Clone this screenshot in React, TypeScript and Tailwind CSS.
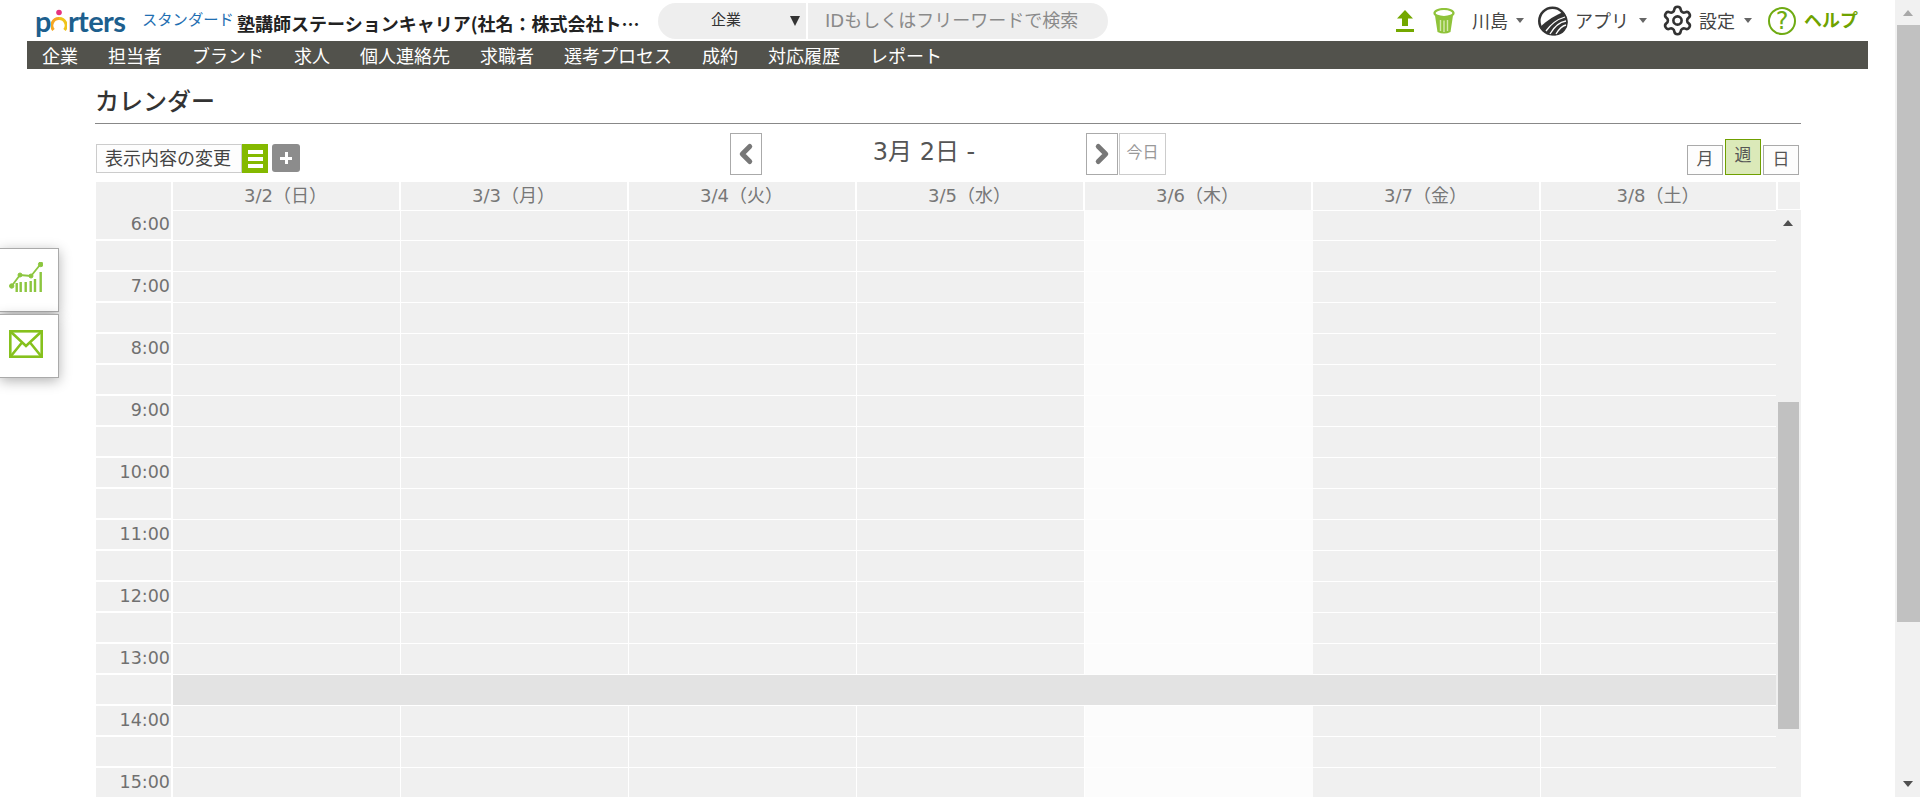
import { ChevronLeft, ChevronRight, Settings } from 'lucide-react'

const navItems = ['企業', '担当者', 'ブランド', '求人', '個人連絡先', '求職者', '選考プロセス', '成約', '対応履歴', 'レポート']
const days = ['3/2（日）', '3/3（月）', '3/4（火）', '3/5（水）', '3/6（木）', '3/7（金）', '3/8（土）']
const rows = Array.from({ length: 19 }, (_, i) => ({
  label: i % 2 === 0 ? `${6 + i / 2}:00` : '',
  lunch: i === 15,
}))

function Caret() {
  return <span className="inline-block border-x-[4px] border-t-[5px] border-x-transparent border-t-[#666]" />
}

function UploadIcon() {
  return (
    <svg width="18" height="22" viewBox="0 0 18 22" className="text-[#74a800]">
      <path d="M9 0 L17 8.5 H12 V16 H6 V8.5 H1 Z" fill="currentColor" />
      <rect x="0" y="19" width="18" height="3" fill="currentColor" />
    </svg>
  )
}

function TrashIcon() {
  return (
    <svg width="22" height="26" viewBox="0 0 22 26">
      <ellipse cx="11" cy="5" rx="9.5" ry="4" fill="none" stroke="#8fc33a" strokeWidth="2.2" />
      <path d="M2 7.5 L4.5 24 Q11 27 17.5 24 L20 7.5 Q11 11 2 7.5 Z" fill="#8fc33a" />
      <path d="M7.5 12 V23 M11 12.5 V24 M14.5 12 V23" stroke="#d5e9ae" strokeWidth="1.4" />
    </svg>
  )
}

function AppIcon() {
  return (
    <svg width="31" height="30" viewBox="0 0 31 30" fill="none">
      <circle cx="15.5" cy="15" r="13.2" stroke="#333" strokeWidth="2.6" />
      <path d="M3 21 C10 14 19 9 26 6 A13 13 0 0 1 9 26.5 Z" fill="#333" />
      <path d="M9 25 C14 18 21 13 28 11 M13 28 C17 21 23 16 29 15 M19 28 C22 23 25 20 29 19" stroke="#fff" strokeWidth="1.3" />
    </svg>
  )
}

function ChartIcon() {
  return (
    <svg width="34" height="31" viewBox="0 0 34 31" fill="none" stroke="#8cc63f">
      <path d="M2.7 24 L11 13 L22 14 L31.7 2" strokeWidth="1.8" />
      <circle cx="2.7" cy="24" r="2.2" fill="#8cc63f" />
      <circle cx="11" cy="13" r="2" fill="#8cc63f" />
      <circle cx="22" cy="14" r="2" fill="#8cc63f" />
      <circle cx="31.7" cy="2.4" r="2.3" fill="#8cc63f" />
      <path d="M7.7 21 V30 M11.7 20 V30 M16.7 20 V30 M21.7 19 V30 M26 17 V30 M31.7 10 V30" strokeWidth="2.4" />
    </svg>
  )
}

function MailIcon() {
  return (
    <svg width="34" height="28" viewBox="0 0 34 28" fill="none" stroke="#86c11d" strokeWidth="2.6">
      <rect x="1.3" y="1.3" width="31.4" height="25.4" />
      <path d="M2 2 L17 16 L32 2 M2 26 L13 12.5 M32 26 L21 12.5" />
    </svg>
  )
}

function Logo() {
  return (
    <div className="flex h-[41px] w-[107px] items-start pt-[2px] font-['Lato',sans-serif] text-[29px] font-bold leading-[37px] tracking-[-0.6px] text-[#1d5f8e]">
      <span>p</span>
      <svg width="16" height="26" viewBox="0 0 16 26" fill="none" className="mx-[0.5px] mt-[7px] shrink-0">
        <circle cx="8" cy="3.5" r="2.8" fill="#e6337f" />
        <path d="M2.5 21 A7 7 0 0 1 8 9.5" stroke="#f5a623" strokeWidth="3" />
        <path d="M13.5 21 A7 7 0 0 0 8 9.5" stroke="#f0c419" strokeWidth="3" />
      </svg>
      <span>rters</span>
    </div>
  )
}

function Header() {
  return (
    <header className="flex h-[41px] items-center pl-[35px]">
      <Logo />
      <span className="w-[95px] whitespace-nowrap text-[15.3px] text-[#1f6fb2]">スタンダード</span>
      <span className="mt-[5px] w-[403px] truncate font-['Noto_Sans_CJK_JP',sans-serif] text-[18px] font-bold text-[#222]">
        塾講師ステーションキャリア(社名：株式会社トップ
      </span>
      <div className="ml-[18px] flex h-[36px] w-[148px] items-center rounded-l-[18px] bg-[#eeeeee]">
        <span className="ml-[53px] text-[15px] text-[#333]">企業</span>
        <span className="ml-[49px] border-x-[5.5px] border-t-[10px] border-x-transparent border-t-[#333]" />
      </div>
      <div className="ml-[2px] flex h-[36px] w-[300px] items-center rounded-r-[18px] bg-[#eeeeee] pl-[17px] text-[18px] text-[#8a8a8a]">
        IDもしくはフリーワードで検索
      </div>
      <div className="ml-[288px]">
        <UploadIcon />
      </div>
      <div className="ml-[19px]">
        <TrashIcon />
      </div>
      <span className="ml-[17px] mt-[2px] text-[18px] text-[#444]">川島</span>
      <span className="ml-[8px] flex"><Caret /></span>
      <div className="ml-[13px] flex">
        <AppIcon />
      </div>
      <span className="ml-[7px] mt-[2px] text-[18px] text-[#444]">アプリ</span>
      <span className="ml-[10px] flex"><Caret /></span>
      <Settings size={33} strokeWidth={1.9} className="ml-[14px] text-[#333]" />
      <span className="ml-[5px] mt-[2px] text-[18px] text-[#444]">設定</span>
      <span className="ml-[9px] flex"><Caret /></span>
      <div className="ml-[16px] flex h-[28px] w-[28px] items-center justify-center rounded-full border-[2.5px] border-[#6fab13] text-[24px] leading-none text-[#6fab13]">
        ?
      </div>
      <span className="ml-[8px] whitespace-nowrap text-[18px] font-bold text-[#6fa300]">ヘルプ</span>
    </header>
  )
}

function Toolbar() {
  return (
    <div className="ml-[96px] flex h-[58px] w-[1704px] items-start">
      <div className="mt-[20px] flex w-[634px] items-start">
        <div className="flex h-[29px] w-[146px] items-center border border-[#cccccc] bg-[#fdfdfd] pl-[8px] text-[18px] whitespace-nowrap text-[#444]">
          表示内容の変更
        </div>
        <div className="flex h-[29px] w-[26px] flex-col items-center justify-center gap-[3px] bg-[#84b900]">
          <span className="h-[4px] w-[15px] bg-white" />
          <span className="h-[4px] w-[15px] bg-white" />
          <span className="h-[4px] w-[15px] bg-white" />
        </div>
        <div className="ml-[4px] flex h-[28px] w-[28px] items-center justify-center rounded-[3px] bg-[#8c8c8c] text-white">
          <span className="relative h-[12px] w-[12px]">
            <span className="absolute left-0 top-[4.5px] h-[3px] w-[12px] bg-white" />
            <span className="absolute left-[4.5px] top-0 h-[12px] w-[3px] bg-white" />
          </span>
        </div>
      </div>
      <div className="mt-[9px] flex h-[42px] w-[32px] items-center justify-center border border-[#aaaaaa] text-[#777]">
        <ChevronLeft size={32} strokeWidth={4} />
      </div>
      <div className="mt-[9px] flex h-[38px] w-[324px] items-center justify-center text-[24px] text-[#555]">3月 2日 -</div>
      <div className="mt-[9px] flex h-[42px] w-[32px] items-center justify-center border border-[#aaaaaa] text-[#777]">
        <ChevronRight size={32} strokeWidth={4} />
      </div>
      <div className="ml-[1px] mt-[9px] flex h-[42px] w-[47px] items-start justify-center border border-[#cccccc] pt-[7px] text-[16px] text-[#999]">
        今日
      </div>
      <div className="ml-auto mr-[1px] mt-[15px] flex items-end gap-[2px]">
        <div className="flex h-[30px] w-[36px] items-center justify-center border border-[#aaaaaa] bg-[#fdfdfd] text-[17px] text-[#555]">月</div>
        <div className="flex h-[36px] w-[36px] items-center justify-center border border-[#6f9f00] bg-[#dbe9b9] pb-[3px] text-[17px] text-[#555]">週</div>
        <div className="flex h-[30px] w-[36px] items-center justify-center border border-[#aaaaaa] bg-[#fdfdfd] text-[17px] text-[#555]">日</div>
      </div>
    </div>
  )
}

function Calendar() {
  return (
    <div className="ml-[96px] flex h-[615px] w-[1705px] overflow-hidden">
      <div className="w-[1680px] shrink-0">
        <div className="grid h-[28px] grid-cols-[77px_repeat(6,228px)_235px]">
          <div className="border-b border-r-2 border-white bg-[#f0f0f0]" />
          {days.map((d) => (
            <div
              key={d}
              className="flex items-center justify-center border-b border-r-2 border-white bg-[#f0f0f0] pb-[1px] pr-[1px] text-[18px] text-[#777] last:border-r-0"
            >
              {d}
            </div>
          ))}
        </div>
        <div className="grid grid-cols-[77px_repeat(6,228px)_235px]">
          {rows.map((row, i) => (
            <div key={i} className="contents">
              <div className="flex h-[31px] items-center justify-end border-b-2 border-r-2 border-white bg-[#f0f0f0] pb-[1px] pr-[1px] text-[17.5px] text-[#707070]">
                {row.label}
              </div>
              {row.lunch ? (
                <div className="col-span-7 h-[31px] border-b border-white bg-[#e3e3e3]" />
              ) : (
                days.map((d, j) => (
                  <div
                    key={d}
                    className={
                      j === 4
                        ? 'h-[31px] border-b border-[#fefefe] bg-[#fcfcfc]'
                        : i === 0
                          ? 'h-[31px] border-y border-r border-white bg-[#f0f0f0] last:border-r-0'
                          : 'h-[31px] border-b border-r border-white bg-[#f0f0f0] last:border-r-0'
                    }
                  />
                ))
              )}
            </div>
          ))}
        </div>
      </div>
      <div className="w-[25px]">
        <div className="ml-[2px] h-[27px] w-[22px] bg-[#f0f0f0]" />
        <div className="h-[1px]" />
        <div className="flex h-[587px] flex-col bg-[#f0f0f0] pt-[10px]">
          <span className="ml-[7px] h-0 w-0 border-x-[5.5px] border-b-[6px] border-x-transparent border-b-[#505050]" />
          <div className="ml-[2px] mt-[176px] h-[327px] w-[21px] bg-[#c1c1c1]" />
        </div>
      </div>
    </div>
  )
}

function PageScrollbar() {
  return (
    <div className="flex h-[797px] w-[25px] shrink-0 flex-col bg-[#f1f1f1]">
      <div className="flex h-[25px] items-center justify-center">
        <span className="h-0 w-0 border-x-[5.5px] border-b-[6px] border-x-transparent border-b-[#a8a8a8]" />
      </div>
      <div className="ml-[2px] h-[597px] w-[23px] bg-[#c1c1c1]" />
      <div className="flex flex-1 items-end justify-center pb-[10px]">
        <span className="h-0 w-0 border-x-[5.5px] border-t-[6px] border-x-transparent border-t-[#505050]" />
      </div>
    </div>
  )
}

export default function App() {
  return (
    <div className="relative flex h-[800px] w-full overflow-hidden bg-white font-['DejaVu_Sans','Noto_Sans_CJK_JP',sans-serif]">
      <div className="flex-1">
        <Header />
        <nav className="ml-[27px] flex h-[28px] w-[1841px] items-center gap-[30px] bg-[#52524c] pl-[15px] text-[18px] leading-none text-white">
          {navItems.map((item) => (
            <span key={item} className="font-['Noto_Sans_CJK_JP',sans-serif]">{item}</span>
          ))}
        </nav>
        <div className="ml-[95px] flex h-[55px] w-[1706px] items-end border-b border-[#888888] pb-[3px] text-[24px] font-medium text-[#333]">
          カレンダー
        </div>
        <Toolbar />
        <Calendar />
      </div>
      <PageScrollbar />

      {/* floating side tabs */}
      <div className="absolute left-0 top-[248px] flex flex-col gap-[2px]">
        <div className="flex h-[64px] w-[59px] items-start justify-end border border-l-0 border-[#aaaaaa] bg-white pr-[15px] pt-[13px] shadow-[0_3px_12px_rgba(0,0,0,0.3)]">
          <ChartIcon />
        </div>
        <div className="flex h-[64px] w-[59px] items-start justify-end border border-l-0 border-[#aaaaaa] bg-white pr-[15px] pt-[15px] shadow-[0_3px_12px_rgba(0,0,0,0.3)]">
          <MailIcon />
        </div>
      </div>
    </div>
  )
}
